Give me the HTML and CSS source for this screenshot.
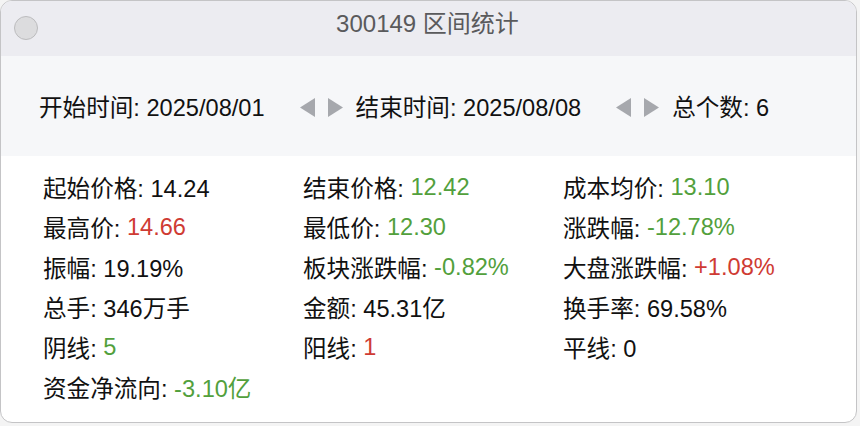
FILE: index.html
```html
<!DOCTYPE html>
<html lang="zh">
<head>
<meta charset="utf-8">
<title>300149 区间统计</title>
<link rel="stylesheet" href="styles.css">
</head>
<body>
<div class="window">
  <div class="titlebar">
    <span class="close"></span>
    <span class="title">300149 区间统计</span>
  </div>
  <div class="toolbar">
    <span class="field">开始时间: 2025/08/01</span>
    <span class="arrows">
      <svg class="arr" width="15" height="19" viewBox="0 0 15 19"><polygon points="15,0 15,19 0,9.5"/></svg>
      <svg class="arr" width="15" height="19" viewBox="0 0 15 19"><polygon points="0,0 0,19 15,9.5"/></svg>
    </span>
    <span class="field">结束时间: 2025/08/08</span>
    <span class="arrows">
      <svg class="arr" width="15" height="19" viewBox="0 0 15 19"><polygon points="15,0 15,19 0,9.5"/></svg>
      <svg class="arr" width="15" height="19" viewBox="0 0 15 19"><polygon points="0,0 0,19 15,9.5"/></svg>
    </span>
    <span class="field">总个数: 6</span>
  </div>
  <div class="stats">
    <div class="cell">起始价格: 14.24</div>
    <div class="cell">结束价格: <span class="down">12.42</span></div>
    <div class="cell">成本均价: <span class="down">13.10</span></div>
    <div class="cell">最高价: <span class="up">14.66</span></div>
    <div class="cell">最低价: <span class="down">12.30</span></div>
    <div class="cell">涨跌幅: <span class="down">-12.78%</span></div>
    <div class="cell">振幅: 19.19%</div>
    <div class="cell">板块涨跌幅: <span class="down">-0.82%</span></div>
    <div class="cell">大盘涨跌幅: <span class="up">+1.08%</span></div>
    <div class="cell">总手: 346万手</div>
    <div class="cell">金额: 45.31亿</div>
    <div class="cell">换手率: 69.58%</div>
    <div class="cell">阴线: <span class="down">5</span></div>
    <div class="cell">阳线: <span class="up">1</span></div>
    <div class="cell">平线: 0</div>
    <div class="cell">资金净流向: <span class="down">-3.10亿</span></div>
  </div>
</div>
</body>
</html>
```
FILE: styles.css
```css
html, body {
  margin: 0;
  padding: 0;
}
body {
  width: 860px;
  height: 426px;
  background: #f4f4f4;
  font-family: "Liberation Sans", "Noto Sans CJK SC", sans-serif;
  color: #111;
  overflow: hidden;
}
.window {
  box-sizing: border-box;
  width: 857px;
  height: 423px;
  border: 1px solid #c4c4c6;
  border-radius: 12px;
  background: #fff;
  overflow: hidden;
  display: flex;
  flex-direction: column;
}
.titlebar {
  height: 55px;
  flex: none;
  background: #ececf1;
  position: relative;
  display: flex;
  align-items: center;
  justify-content: center;
}
.close {
  position: absolute;
  left: 13px;
  top: 15px;
  width: 22px;
  height: 22px;
  border-radius: 50%;
  background: #dcdcde;
  border: 1px solid #bcbcbe;
}
.title {
  font-size: 24px;
  color: #5a5a5c;
  margin-top: -14px;
  margin-left: -2px;
}
.toolbar {
  height: 100px;
  flex: none;
  background: #f6f7f9;
  display: flex;
  align-items: center;
  padding-left: 38px;
  font-size: 23.6px;
}
.arrows {
  display: flex;
  gap: 13px;
  margin-left: 35px;
  margin-right: 13px;
  margin-top: 2px;
}
.arr {
  fill: #a6a8ad;
  display: block;
}
.stats {
  display: grid;
  grid-template-columns: 260px 260px 260px;
  grid-auto-rows: 40px;
  padding: 11px 0 0 42px;
  font-size: 23.6px;
}
.cell {
  display: flex;
  align-items: center;
  white-space: pre;
}
.up {
  color: #cf3b33;
}
.down {
  color: #52a03c;
}
```
